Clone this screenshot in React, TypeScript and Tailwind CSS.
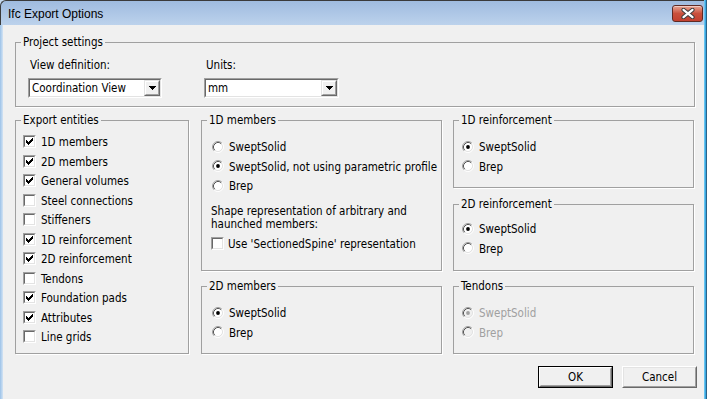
import React from "react";

function CheckMark() {
  return (
    <svg width="7" height="7" viewBox="0 0 7 7" shapeRendering="crispEdges">
      <path
        d="M6 0h1v1h-1z M5 1h2v1h-2z M0 2h1v1h-1z M4 2h3v1h-3z M0 3h2v1h-2z M3 3h3v1h-3z M0 4h5v1h-5z M1 5h3v1h-3z M2 6h1v1h-1z"
        fill="#000"
      />
    </svg>
  );
}

function Check({ checked }: { checked: boolean }) {
  return (
    <span className="block w-[13px] h-[13px] shrink-0 border border-t-[#a0a0a0] border-l-[#a0a0a0] border-b-white border-r-white">
      <span className="flex w-full h-full items-center justify-center bg-white border border-t-[#696969] border-l-[#696969] border-b-[#e3e3e3] border-r-[#e3e3e3]">
        {checked && <CheckMark />}
      </span>
    </span>
  );
}

function Radio({ checked, disabled }: { checked: boolean; disabled?: boolean }) {
  return (
    <span className="block w-[13px] h-[12px] shrink-0">
      <svg width="12" height="12" viewBox="0 0 12 12">
        <circle cx="6" cy="6" r="4.2" fill={disabled ? "#f0f0f0" : "#fff"} />
        <path d="M2.11 9.89 A5.5 5.5 0 0 1 9.89 2.11" stroke="#a0a0a0" strokeWidth="1" fill="none" />
        <path d="M9.89 2.11 A5.5 5.5 0 0 1 2.11 9.89" stroke="#ffffff" strokeWidth="1" fill="none" />
        <path d="M2.82 9.18 A4.5 4.5 0 0 1 9.18 2.82" stroke="#555555" strokeWidth="1" fill="none" />
        <path d="M9.18 2.82 A4.5 4.5 0 0 1 2.82 9.18" stroke="#e3e3e3" strokeWidth="1" fill="none" />
        {checked && <circle cx="6" cy="6" r="1.9" fill={disabled ? "#a0a0a0" : "#000"} />}
      </svg>
    </span>
  );
}

function RadioRow({ label, checked, disabled }: { label: string; checked?: boolean; disabled?: boolean }) {
  return (
    <div className="h-[19.5px] flex items-center">
      <Radio checked={!!checked} disabled={disabled} />
      <span className={"ml-[4px] pt-[1px] leading-[14px] whitespace-nowrap " + (disabled ? "text-[#a0a0a0]" : "")}>{label}</span>
    </div>
  );
}

function CheckRow({ label, checked, gap }: { label: string; checked?: boolean; gap: "a" | "b" }) {
  return (
    <div className="h-[19.5px] flex items-center">
      <Check checked={!!checked} />
      <span className={(gap === "a" ? "ml-[5px]" : "ml-[4px]") + " pt-[1px] leading-[14px] whitespace-nowrap"}>{label}</span>
    </div>
  );
}

function Combo({ value, wide }: { value: string; wide?: boolean }) {
  return (
    <div
      className={
        (wide ? "w-[135px]" : "w-[134px]") +
        " mt-[6px] h-[20px] border border-t-[#a0a0a0] border-l-[#a0a0a0] border-b-white border-r-white"
      }
    >
      <div className="flex h-full bg-white border border-t-[#696969] border-l-[#696969] border-b-[#e3e3e3] border-r-[#e3e3e3]">
        <div className="flex-1 pl-[2px] flex items-center leading-[14px] whitespace-nowrap overflow-hidden">{value}</div>
        <div className="w-[16px] h-full border border-t-[#e3e3e3] border-l-[#e3e3e3] border-b-[#696969] border-r-[#696969]">
          <div className="w-full h-full bg-[#f0f0f0] border border-t-white border-l-white border-b-[#a0a0a0] border-r-[#a0a0a0] flex items-center justify-center">
            <svg width="7" height="4" viewBox="0 0 7 4" shapeRendering="crispEdges">
              <path d="M0 0h7v1h-7z M1 1h5v1h-5z M2 2h3v1h-3z M3 3h1v1h-1z" fill="#000" />
            </svg>
          </div>
        </div>
      </div>
    </div>
  );
}

function Group({
  title,
  className,
  children,
}: {
  title: string;
  className: string;
  children: React.ReactNode;
}) {
  return (
    <fieldset className={"border border-[#a0a0a0] shadow-[1px_1px_0_#ffffff] px-0 m-0 min-w-0 " + className}>
      <legend className="ml-[5px] px-[2px] leading-[14px] whitespace-nowrap">{title}</legend>
      {children}
    </fieldset>
  );
}

export default function App() {
  return (
    <div className="w-[707px] h-[399px] overflow-hidden flex bg-[#c3d8ef] font-['DejaVu_Sans_Condensed','DejaVu_Sans',sans-serif] text-[11.5px] text-black">
      <div className="w-[704px] flex flex-col">
        <div className="h-[25px] shrink-0 flex items-center pl-[7px] border-t border-l border-[#3a3a3a] rounded-tl-[6px] bg-gradient-to-b from-[#9fbbdf] to-[#bcd2ec]">
          <span className="font-['Liberation_Sans',Arial,sans-serif] text-[12px] leading-[14px] mt-[2px] whitespace-nowrap">Ifc Export Options</span>
          <div className="ml-auto mr-[1px] w-[31px] h-[17px] rounded-[3px] border border-[#5e2a24] bg-gradient-to-b from-[#e6a595] via-[#c9503c] to-[#c3402f] flex items-center justify-center shadow-[inset_0_1px_0_rgba(255,255,255,0.45)]">
            <svg width="14" height="11" viewBox="0 0 14 11">
              <path d="M2.5 1.8 L11.5 9.2 M11.5 1.8 L2.5 9.2" stroke="#3d3d3d" strokeWidth="4.2" strokeLinecap="round" fill="none" />
              <path d="M2.5 1.8 L11.5 9.2 M11.5 1.8 L2.5 9.2" stroke="#ffffff" strokeWidth="2.2" strokeLinecap="round" fill="none" />
            </svg>
          </div>
        </div>
        <div className="flex-1 flex">
          <div className="w-[3px] shrink-0 bg-[linear-gradient(to_right,#9cc2e8,#d4e4f4)]" />
          <div className="flex-1 bg-[#f0f0f0] pt-[10px] pl-[12px] pr-[9px] flex flex-col">
            <Group title="Project settings" className="h-[72px]">
              <div className="flex pl-[12px] pt-[9px]">
                <div className="flex flex-col">
                  <div className="pl-[2px] leading-[14px]">View definition:</div>
                  <Combo value="Coordination View" />
                </div>
                <div className="flex flex-col ml-[42px]">
                  <div className="pl-[2px] leading-[14px]">Units:</div>
                  <Combo value="mm" wide />
                </div>
              </div>
            </Group>

            <div className="mt-[6px] flex">
              <Group title="Export entities" className="w-[174px] h-[241px]">
                <div className="pl-[7px] pt-[5px]">
                  <CheckRow gap="a" label="1D members" checked />
                  <CheckRow gap="a" label="2D members" checked />
                  <CheckRow gap="a" label="General volumes" checked />
                  <CheckRow gap="a" label="Steel connections" />
                  <CheckRow gap="a" label="Stiffeners" />
                  <CheckRow gap="a" label="1D reinforcement" checked />
                  <CheckRow gap="a" label="2D reinforcement" checked />
                  <CheckRow gap="a" label="Tendons" />
                  <CheckRow gap="a" label="Foundation pads" checked />
                  <CheckRow gap="a" label="Attributes" checked />
                  <CheckRow gap="a" label="Line grids" />
                </div>
              </Group>

              <div className="ml-[12px] w-[241px] flex flex-col gap-[8px]">
                <Group title="1D members" className="h-[158px]">
                  <div className="pl-[10px] pt-[10px]">
                    <RadioRow label="SweptSolid" />
                    <RadioRow label="SweptSolid, not using parametric profile" checked />
                    <RadioRow label="Brep" />
                  </div>
                  <div className="pl-[9px] mt-[9px] leading-[13px]">
                    <div>Shape representation of arbitrary and</div>
                    <div>haunched members:</div>
                  </div>
                  <div className="pl-[9px] mt-[3px]">
                    <CheckRow gap="b" label="Use 'SectionedSpine' representation" />
                  </div>
                </Group>
                <Group title="2D members" className="h-[75px]">
                  <div className="pl-[10px] pt-[10px]">
                    <RadioRow label="SweptSolid" checked />
                    <RadioRow label="Brep" />
                  </div>
                </Group>
              </div>

              <div className="ml-[11px] w-[241px] flex flex-col">
                <Group title="1D reinforcement" className="h-[75px]">
                  <div className="pl-[8px] pt-[10px]">
                    <RadioRow label="SweptSolid" checked />
                    <RadioRow label="Brep" />
                  </div>
                </Group>
                <Group title="2D reinforcement" className="h-[74px] mt-[9px]">
                  <div className="pl-[8px] pt-[8px]">
                    <RadioRow label="SweptSolid" checked />
                    <RadioRow label="Brep" />
                  </div>
                </Group>
                <Group title="Tendons" className="h-[75px] mt-[8px]">
                  <div className="pl-[8px] pt-[10px]">
                    <RadioRow label="SweptSolid" checked disabled />
                    <RadioRow label="Brep" disabled />
                  </div>
                </Group>
              </div>
            </div>

            <div className="mt-[12px] mr-[-2px] flex justify-end gap-[9px]">
              <div className="w-[75px] h-[22px] border border-black">
                <div className="w-full h-full border border-t-white border-l-white border-b-[#696969] border-r-[#696969]">
                  <div className="w-full h-full border border-t-[#f0f0f0] border-l-[#f0f0f0] border-b-[#a0a0a0] border-r-[#a0a0a0] flex items-center justify-center leading-[14px]">
                    OK
                  </div>
                </div>
              </div>
              <div className="w-[75px] h-[22px] border border-t-white border-l-white border-b-[#696969] border-r-[#696969]">
                <div className="w-full h-full border border-t-[#e3e3e3] border-l-[#e3e3e3] border-b-[#a0a0a0] border-r-[#a0a0a0] flex items-center justify-center leading-[14px]">
                  Cancel
                </div>
              </div>
            </div>
          </div>
        </div>
      </div>
      <div className="w-[3px] shrink-0 bg-[linear-gradient(to_right,#7fd3f7,#3ba6e0,#23435e)]" />
    </div>
  );
}
